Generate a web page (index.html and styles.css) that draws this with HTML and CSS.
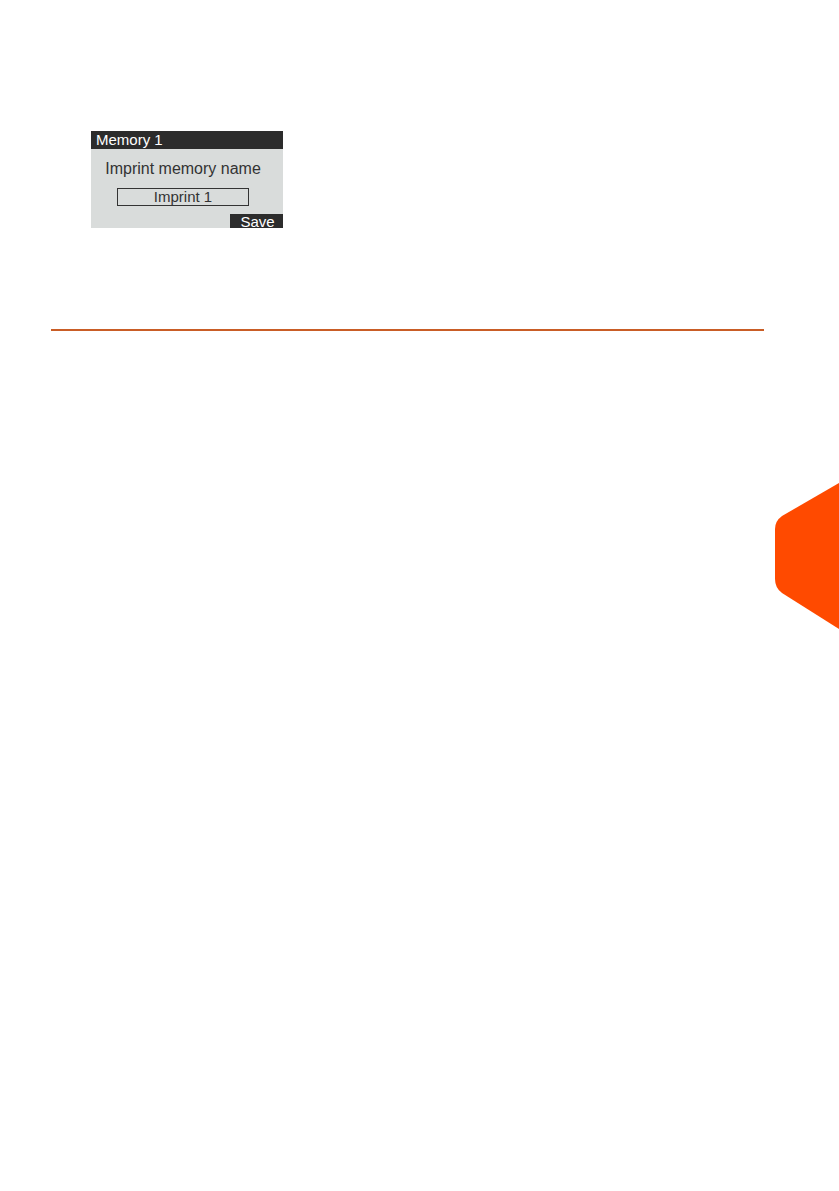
FILE: index.html
```html
<!DOCTYPE html>
<html>
<head>
<meta charset="utf-8">
<link rel="stylesheet" href="styles.css">
</head>
<body>
<div class="page">
  <div class="screen">
    <div class="screen-head">Memory 1</div>
    <div class="screen-body">
      <div class="label">Imprint memory name</div>
      <div class="field">Imprint 1</div>
    </div>
    <div class="screen-foot"><span class="softkey">Save</span></div>
  </div>
  <hr class="rule">
</div>
<svg class="tab" width="64" height="146" viewBox="0 0 64 146">
  <path d="M64 0 L64 146 L7 110 Q0 105 0 96 L0 46 Q0 38 7 33 Z" fill="#ff4a00"/>
</svg>
</body>
</html>
```
FILE: styles.css
```css
html, body {
  margin: 0;
  padding: 0;
  background: #ffffff;
}
body {
  font-family: "Liberation Sans", Arial, sans-serif;
}
.page {
  padding: 131px 0 0 51px;
}
.screen {
  margin-left: 40px;
  width: 192px;
  height: 97px;
  background: #d9dcdb;
  display: flex;
  flex-direction: column;
}
.screen-head {
  height: 18px;
  background: #2c2c2c;
  color: #ffffff;
  font-size: 15px;
  line-height: 18px;
  padding-left: 5px;
}
.screen-body {
  flex: 1;
  display: flex;
  flex-direction: column;
  align-items: center;
  padding-right: 8px;
}
.label {
  margin-top: 10px;
  font-size: 16px;
  line-height: 19px;
  color: #333333;
}
.field {
  margin-top: 10px;
  width: 130px;
  height: 16px;
  border: 1px solid #333333;
  font-size: 15px;
  line-height: 16px;
  text-align: center;
  color: #333333;
}
.screen-foot {
  display: flex;
  justify-content: flex-end;
}
.softkey {
  width: 53px;
  height: 14px;
  background: #2c2c2c;
  color: #ffffff;
  font-size: 15px;
  line-height: 15px;
  text-align: center;
  padding-left: 2px;
  box-sizing: border-box;
}
.rule {
  margin: 101px 0 0 0;
  width: 713px;
  height: 2px;
  border: 0;
  background: #c95d26;
}
.tab {
  position: absolute;
  right: 0;
  top: 483px;
}
```
